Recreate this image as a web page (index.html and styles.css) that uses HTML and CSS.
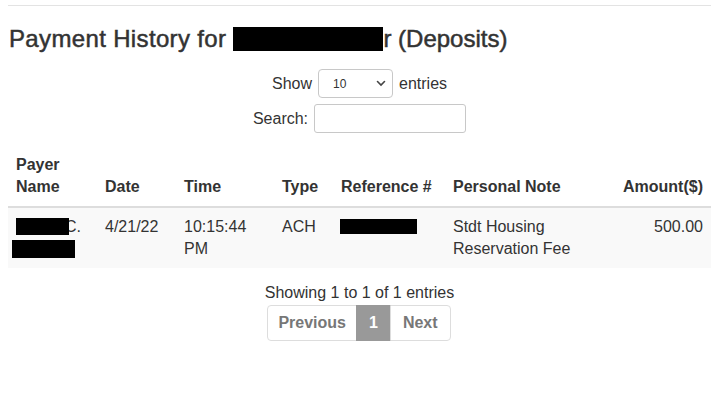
FILE: index.html
```html
<!DOCTYPE html>
<html>
<head>
<meta charset="utf-8">
<link rel="stylesheet" href="styles.css">
</head>
<body>
<div class="page">
  <hr class="rule">
  <h3 class="title">Payment History for <span class="redact redact-title"></span><span class="title-tail">r (Deposits)</span></h3>
  <div class="controls">
    <label class="ctl">Show
      <span class="select"><span class="select-val">10</span>
        <svg class="chev" width="10" height="7" viewBox="0 0 10 7"><path d="M1.5 1.5 L5 5 L8.5 1.5" fill="none" stroke="#444" stroke-width="1.6" stroke-linecap="round"/></svg>
      </span>
      entries</label>
    <label class="ctl">Search: <span class="input"></span></label>
  </div>
  <table class="tbl">
    <thead>
      <tr>
        <th class="c-payer">Payer<br>Name</th>
        <th class="c-date">Date</th>
        <th class="c-time">Time</th>
        <th class="c-type">Type</th>
        <th class="c-ref">Reference #</th>
        <th class="c-note">Personal Note</th>
        <th class="c-amt">Amount($)</th>
      </tr>
    </thead>
    <tbody>
      <tr>
        <td class="c-payer"><span class="redact redact-n1"></span>C.<br><span class="redact redact-n2"></span></td>
        <td>4/21/22</td>
        <td>10:15:44<br>PM</td>
        <td>ACH</td>
        <td><span class="redact redact-ref"></span></td>
        <td>Stdt Housing<br>Reservation Fee</td>
        <td class="c-amt">500.00</td>
      </tr>
    </tbody>
  </table>
  <div class="info">Showing 1 to 1 of 1 entries</div>
  <div class="pager">
    <span class="pg pg-prev">Previous</span><span class="pg pg-active">1</span><span class="pg">Next</span>
  </div>
</div>
</body>
</html>
```

FILE: styles.css
```css
html, body {
  margin: 0;
  padding: 0;
  background: #fff;
}
body {
  font-family: "Liberation Sans", Arial, sans-serif;
  font-size: 16px;
  color: #333;
}
.page {
  padding: 0 11px 0 8px;
}
.rule {
  margin: 5px 0 0 0;
  border: 0;
  border-top: 1px solid #e3e3e3;
  height: 0;
}
.title {
  font-size: 24px;
  font-weight: normal;
  letter-spacing: 0.35px;
  -webkit-text-stroke: 0.5px #333;
  margin: 19px 0 0 1px;
  line-height: 28px;
  color: #333;
}
.title-tail {
  letter-spacing: 0;
}
.redact {
  display: inline-block;
  background: #000;
  vertical-align: middle;
  -webkit-text-stroke: 0;
}
.redact-title {
  width: 150px;
  height: 24px;
  vertical-align: -4px;
}
.controls {
  display: flex;
  flex-direction: column;
  align-items: center;
  gap: 6px;
  margin-top: 16px;
}
.ctl {
  display: flex;
  align-items: center;
  gap: 6px;
  font-size: 16px;
  color: #333;
}
.select {
  display: inline-flex;
  align-items: center;
  justify-content: space-between;
  box-sizing: border-box;
  width: 75px;
  height: 29px;
  border: 1px solid #c8c8c8;
  border-radius: 4px;
  padding: 0 6px 0 14px;
  font-size: 12px;
  color: #333;
}
.chev {
  display: block;
}
.input {
  display: inline-block;
  box-sizing: border-box;
  width: 152px;
  height: 29px;
  border: 1px solid #c8c8c8;
  border-radius: 3px;
}
.tbl {
  width: 703px;
  border-collapse: collapse;
  table-layout: fixed;
  margin-top: 13px;
}
.tbl th, .tbl td {
  padding: 8px;
  text-align: left;
  line-height: 22px;
  vertical-align: top;
}
.tbl th {
  vertical-align: bottom;
  font-weight: bold;
  border-bottom: 2px solid #ddd;
  color: #333;
}
.tbl tbody tr {
  background: #f9f9f9;
}
.c-payer { width: 73px; }
.c-date { width: 63px; }
.c-time { width: 82px; }
.c-type { width: 43px; }
.c-ref { width: 96px; }
.c-note { width: 146px; }
.tbl .c-amt { text-align: right; }
.redact-n1 {
  width: 53px;
  height: 17px;
  vertical-align: -3px;
  margin-right: -4px;
  position: relative;
  z-index: 1;
}
.redact-n2 {
  width: 63px;
  height: 18px;
  margin-left: -4px;
  vertical-align: -4px;
}
.redact-ref {
  width: 77px;
  height: 15px;
  vertical-align: -2px;
  margin-left: -1px;
}
.info {
  text-align: center;
  margin-top: 16px;
  line-height: 18px;
}
.pager {
  display: flex;
  justify-content: center;
  margin-top: 3px;
}
.pg {
  box-sizing: border-box;
  height: 36px;
  line-height: 34px;
  padding: 0 12px;
  border: 1px solid #ddd;
  margin-left: -1px;
  color: #777;
  font-weight: bold;
  font-size: 16px;
}
.pg-prev {
  padding: 0 10px;
}
.pg:first-child {
  border-radius: 4px 0 0 4px;
}
.pg:last-child {
  border-radius: 0 4px 4px 0;
}
.pg-active {
  background: #999;
  border-color: #999;
  color: #fff;
}
```
